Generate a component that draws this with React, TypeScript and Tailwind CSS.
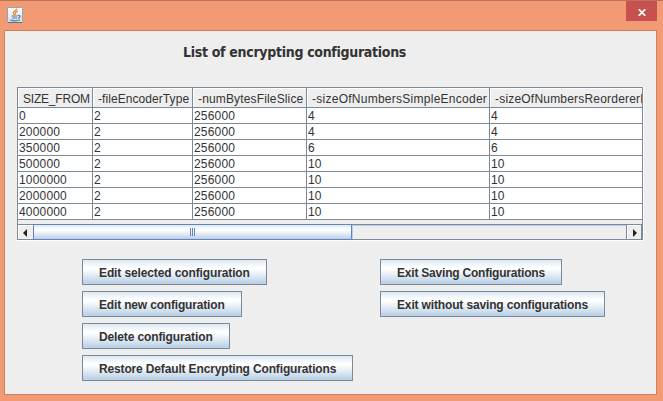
import React from "react";

const columns = [
  { label: "SIZE_FROM", width: "w-[75px]", tracking: "tracking-[-0.2px]" },
  { label: "-fileEncoderType", width: "w-[100px]", tracking: "tracking-[0.07px]" },
  { label: "-numBytesFileSlice", width: "w-[114px]", tracking: "tracking-[0.15px]" },
  { label: "-sizeOfNumbersSimpleEncoder", width: "w-[183px]", tracking: "tracking-[0.26px]" },
  { label: "-sizeOfNumbersReordererEncoder", width: "w-[152px]", tracking: "tracking-[0.2px]" },
];

const rows = [
  ["0", "2", "256000", "4", "4"],
  ["200000", "2", "256000", "4", "4"],
  ["350000", "2", "256000", "6", "6"],
  ["500000", "2", "256000", "10", "10"],
  ["1000000", "2", "256000", "10", "10"],
  ["2000000", "2", "256000", "10", "10"],
  ["4000000", "2", "256000", "10", "10"],
];

function MetalButton({ label, width, tracking }: { label: string; width: string; tracking: string }) {
  return (
    <button
      className={`flex h-[26px] items-center border border-[#7a8a99] bg-[linear-gradient(180deg,#dde8f3_0%,#ffffff_32%,#ffffff_38%,#b8cfe5_100%)] pl-4 text-xs font-bold whitespace-nowrap text-[#333333] ${width}`}
    >
      <span className={`relative top-px ${tracking}`}>{label}</span>
    </button>
  );
}

function JavaIcon() {
  return (
    <svg width="16" height="16" viewBox="0 0 16 16" fill="none">
      <defs>
        <linearGradient id="tile" x1="0" y1="0" x2="0" y2="1">
          <stop offset="0" stopColor="#ffffff" />
          <stop offset="1" stopColor="#d3dde5" />
        </linearGradient>
      </defs>
      <rect x="0.5" y="0.5" width="15" height="15" rx="1" fill="url(#tile)" stroke="#8fa6b8" />
      <path d="M1 15.5H15" stroke="#4f7490" />
      <path d="M9.6 1.5C10.4 3.4 6 4.2 6.3 6C6.4 6.9 7.4 7.2 7.5 8.2M10.8 3.8C8.6 4.8 7.9 5.8 8.9 7.8" stroke="#ee8a2c" strokeWidth="1.3" />
      <path d="M4.5 9H10.5M5 11H10.2M11 8.5C14 8 13.6 10.8 11 11.2M3.2 13C5.5 13.8 10.5 13.8 13 12.8" stroke="#52809f" strokeWidth="1.2" />
    </svg>
  );
}

export default function App() {
  return (
    <div className="flex h-[401px] w-[663px] flex-col overflow-hidden border-t border-[#b9745a] bg-[#f29a74] font-['Liberation_Sans',Arial,sans-serif] text-xs text-[#333333]">
      <header className="flex h-[29px] shrink-0 justify-between pr-1.5 pl-[7px]">
        <div className="pt-1.5">
          <JavaIcon />
        </div>
        <button aria-label="Close" className="flex h-5 w-[31px] items-center justify-center bg-[#c75050]">
          <svg width="8" height="7" viewBox="0 0 8 7" className="mt-0.5">
            <path d="M0.7 0.2L7.3 6.8M7.3 0.2L0.7 6.8" stroke="#fff" strokeWidth="1.7" />
          </svg>
        </button>
      </header>

      <main className="ml-1 h-[365px] w-[653px] border border-[#cf7f60] bg-[#eeeeee]">
        <h1 className="h-14 pt-[11px] pl-[178px] font-['DejaVu_Sans_Condensed','DejaVu_Sans',sans-serif] text-[14px] leading-[20px] font-bold tracking-[-0.3px] whitespace-nowrap [font-stretch:condensed]">
          List of encrypting configurations
        </h1>

        <section className="ml-3 flex h-[154px] w-[627px] flex-col border-r border-b border-white">
          <div className="flex h-[153px] w-[626px] flex-col border border-[#7a8a99]">
            <div className="flex h-5 shrink-0 overflow-hidden border-b border-[#7a8a99]">
              {columns.map((c) => (
                <div
                  key={c.label}
                  className={`shrink-0 overflow-hidden border-r border-[#7a8a99] last:border-r-0 ${c.width}`}
                >
                  <div className="h-full border-t border-l border-white pt-[2px] pl-1 leading-[16px] whitespace-nowrap">
                    <span className={c.tracking}>{c.label}</span>
                  </div>
                </div>
              ))}
            </div>
            <div className="bg-white">
              {rows.map((r) => (
                <div key={r[0]} className="flex h-4 border-b border-[#7a8a99]">
                  {r.map((v, i) => (
                    <div
                      key={i}
                      className={`shrink-0 border-r border-[#7a8a99] pl-px leading-[16px] tracking-[0.18px] last:border-r-0 ${columns[i].width}`}
                    >
                      {v}
                    </div>
                  ))}
                </div>
              ))}
            </div>
            <div className="mt-1 flex h-[15px] border-t border-[#7a8a99]">
              <div className="flex w-[15px] items-center border-t border-l border-white pl-1">
                <svg width="4" height="8" viewBox="0 0 4 8">
                  <path d="M4 0V8L0 4Z" fill="#222" />
                </svg>
              </div>
              <div className="-mt-px flex h-4 w-[319px] items-center justify-center gap-px border border-[#6382bf] bg-[linear-gradient(180deg,#dde8f3_0%,#ffffff_32%,#ffffff_38%,#b8cfe5_100%)]">
                <i className="h-2 w-px bg-[#6382bf]" />
                <i className="h-2 w-px bg-[#6382bf]" />
                <i className="h-2 w-px bg-[#6382bf]" />
              </div>
              <div className="flex-1 border-t border-l border-[#b8cfe5]" />
              <div className="flex w-[16px] items-center border-r border-l border-[#7a8a99]">
                <div className="flex h-full w-full items-center border-t border-l border-white pl-[5px]">
                  <svg width="4" height="8" viewBox="0 0 4 8">
                    <path d="M0 0V8L4 4Z" fill="#222" />
                  </svg>
                </div>
              </div>
            </div>
          </div>
        </section>

        <section className="flex pt-[18px] pl-[77px]">
          <div className="flex w-[298px] flex-col gap-1.5">
            <MetalButton label="Edit selected configuration" width="w-[185px]" tracking="tracking-[-0.12px]" />
            <MetalButton label="Edit new configuration" width="w-[160px]" tracking="tracking-[-0.17px]" />
            <MetalButton label="Delete configuration" width="w-[148px]" tracking="tracking-[-0.12px]" />
            <MetalButton label="Restore Default Encrypting Configurations" width="w-[271px]" tracking="tracking-[-0.15px]" />
          </div>
          <div className="flex flex-col gap-1.5">
            <MetalButton label="Exit Saving Configurations" width="w-[182px]" tracking="tracking-[-0.21px]" />
            <MetalButton label="Exit without saving configurations" width="w-[225px]" tracking="tracking-[-0.15px]" />
          </div>
        </section>
      </main>
    </div>
  );
}
